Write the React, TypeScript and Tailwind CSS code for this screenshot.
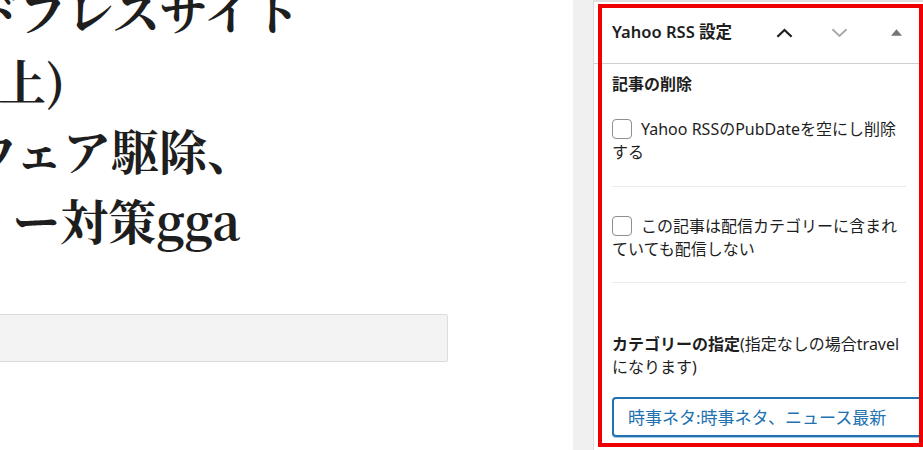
const titleFont = {
  fontFamily: '"Noto Serif CJK JP", "Liberation Serif", "Noto Sans CJK JP", serif',
};

function ChevronUp({ className }: { className?: string }) {
  return (
    <svg viewBox="0 0 18 10" className={className} fill="none" stroke="currentColor" strokeWidth="2.4">
      <path d="M1.5 9 L9 1.8 L16.5 9" />
    </svg>
  );
}

function ChevronDown({ className }: { className?: string }) {
  return (
    <svg viewBox="0 0 18 10" className={className} fill="none" stroke="currentColor" strokeWidth="2">
      <path d="M1.5 1 L9 8.2 L16.5 1" />
    </svg>
  );
}

function Checkbox() {
  return (
    <span className="inline-block w-[20px] h-[20px] mr-[9px] align-[-4px] rounded-[4px] border border-[#8c8f94] bg-white" />
  );
}

function Editor() {
  return (
    <div className="w-[573px] shrink-0 h-full overflow-hidden bg-white">
      <div
        className="mt-[-25px] text-[48px] leading-[70px] font-bold text-[#1e1e1e] whitespace-nowrap"
        style={titleFont}
      >
        <div className="ml-[-123px]">ワードプレスサイト</div>
        <div className="ml-[-50px]">以上)</div>
        <div className="ml-[-127px]">マルウェア駆除、</div>
        <div className="ml-[-80px]">ティー対策gga</div>
      </div>
      <div className="mt-[59px] ml-[-4px] w-[452px] h-[48px] bg-[#f3f3f3] border border-[#dcdcde] rounded-[2px]" />
    </div>
  );
}

function Sidebar() {
  return (
    <div
      className="flex-1 h-full flex flex-col border-t-2 border-[#e0e0e0] overflow-hidden bg-white text-[#1e1e1e]"
      style={{ fontFamily: '"Noto Sans", "Noto Sans CJK JP", sans-serif' }}
    >
      <div className="h-[62px] shrink-0 flex items-center pl-[18px] border-b border-[#cfcfcf]">
        <h2 className="text-[16.5px] font-semibold flex-1">Yahoo RSS 設定</h2>
        <ChevronUp className="w-[17px] h-[10px] text-[#1e1e1e] mr-[38px]" />
        <ChevronDown className="w-[17px] h-[10px] text-[#a7aaad] mr-[43px]" />
        <svg viewBox="0 0 12 7" className="w-[11px] h-[7px] text-[#757575] mr-[21px]" fill="currentColor">
          <path d="M6 0 L12 7 L0 7 Z" />
        </svg>
      </div>
      <div className="pl-[18px] pr-[17px] text-[16px] leading-[23px]">
        <p className="mt-[9px] font-bold">記事の削除</p>
        <p className="mt-[22px]">
          <Checkbox />
          Yahoo RSSのPubDateを空にし削除する
        </p>
        <div className="mt-[22px] h-px bg-[#ebebeb]" />
        <p className="mt-[28px]">
          <Checkbox />
          この記事は配信カテゴリーに含まれていても配信しない
        </p>
        <div className="mt-[21px] h-px bg-[#ebebeb]" />
        <p className="mt-[50px]">
          <span className="font-bold">カテゴリーの指定</span>(指定なしの場合travelになります)
        </p>
        <div className="mt-[18px] w-[320px] h-[40px] flex items-center pl-[14px] border-2 border-[#2271b1] rounded-[4px] text-[17px] text-[#2271b1] shadow-[0_1px_0_#a7c8e8] whitespace-nowrap">
          時事ネタ:時事ネタ、ニュース最新
        </div>
      </div>
    </div>
  );
}

export default function App() {
  return (
    <div className="relative w-[923px] h-[450px] overflow-hidden flex bg-white">
      <Editor />
      <div className="w-[21px] shrink-0 h-full bg-[#f0f0f0] border-r border-[#dddddd]" />
      <Sidebar />
      <div className="absolute left-[598px] top-[4px] w-[325px] h-[443px] border-4 border-[#ee0000] pointer-events-none" />
    </div>
  );
}
